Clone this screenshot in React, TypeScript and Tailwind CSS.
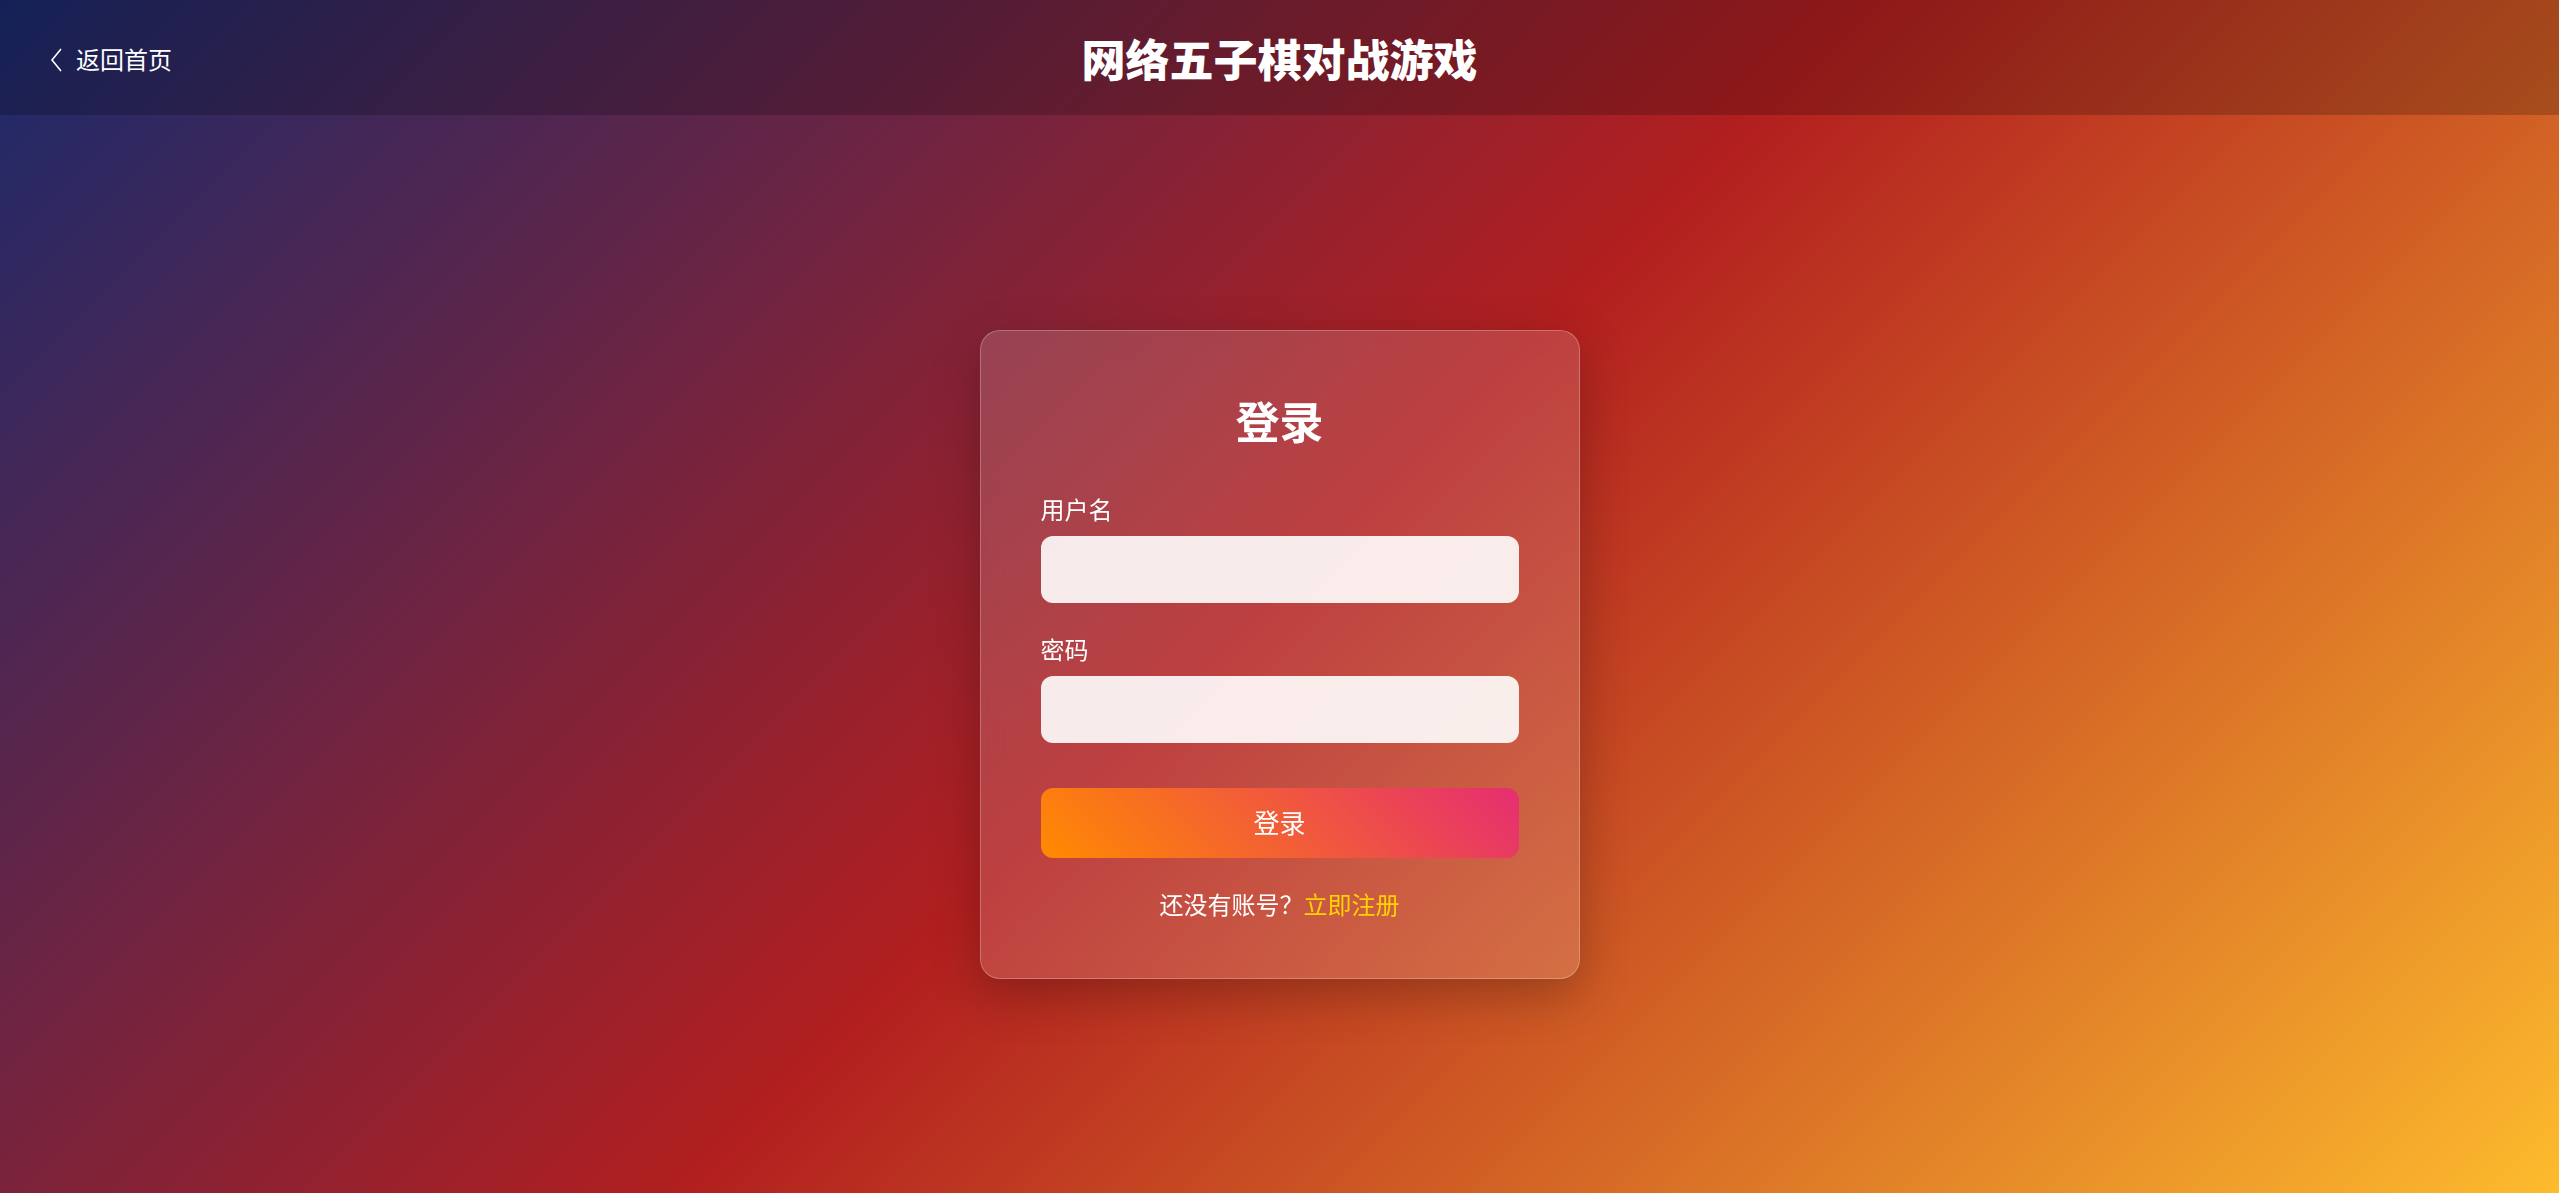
import React from "react";

const font = { fontFamily: '"Noto Sans", "Noto Sans CJK SC", sans-serif' };

const Header: React.FC = () => {
  return (
    <header className="relative flex h-[115px] items-center justify-center bg-black/20 pt-[5px]">
      <a
        href="#"
        className="absolute left-[48px] top-0 flex h-full items-center gap-[10px] pt-[5px] text-[24px] text-white"
      >
        <svg width="18" height="26" viewBox="0 0 18 26" fill="none">
          <path d="M13 2 L4 13 L13 24" stroke="white" strokeWidth="1.6" />
        </svg>
        <span>返回首页</span>
      </a>
      <h1 className="text-[44px] font-black leading-none text-white">网络五子棋对战游戏</h1>
    </header>
  );
};

const Field: React.FC<{ label: string; type: string }> = ({ label, type }) => (
  <div className="flex flex-col gap-[8px]">
    <label className="text-[24px] leading-[36px] text-white">{label}</label>
    <input
      type={type}
      className="h-[67px] w-full rounded-[12px] bg-white/90 px-4 text-[22px] text-gray-800 outline-none"
    />
  </div>
);

const LoginCard: React.FC = () => {
  return (
    <div className="w-[600px] rounded-[20px] border border-white/25 bg-white/15 px-[60px] pt-[65px] pb-[55px] shadow-[0_16px_48px_rgba(0,0,0,0.25)] backdrop-blur-md">
      <h2 className="text-center text-[44px] font-bold leading-[53px] text-white">登录</h2>
      <div className="mt-[43px] flex flex-col gap-[29px]">
        <Field label="用户名" type="text" />
        <Field label="密码" type="password" />
      </div>
      <button className="mt-[45px] h-[70px] w-full rounded-[12px] bg-[linear-gradient(45deg,#ff8a00,#e52e71)] text-[26px] text-white">
        登录
      </button>
      <p className="mt-[29px] text-center text-[24px] leading-[36px] text-white">
        还没有账号？<a href="#" className="text-[#ffd200]">立即注册</a>
      </p>
    </div>
  );
};

export default function App() {
  return (
    <div
      className="flex h-[1193px] w-full flex-col overflow-hidden bg-[linear-gradient(135deg,#1a2a6c,#b21f1f,#fdbb2d)]"
      style={font}
    >
      <Header />
      <main className="flex flex-1 items-start justify-center pt-[215px]">
        <LoginCard />
      </main>
    </div>
  );
}
